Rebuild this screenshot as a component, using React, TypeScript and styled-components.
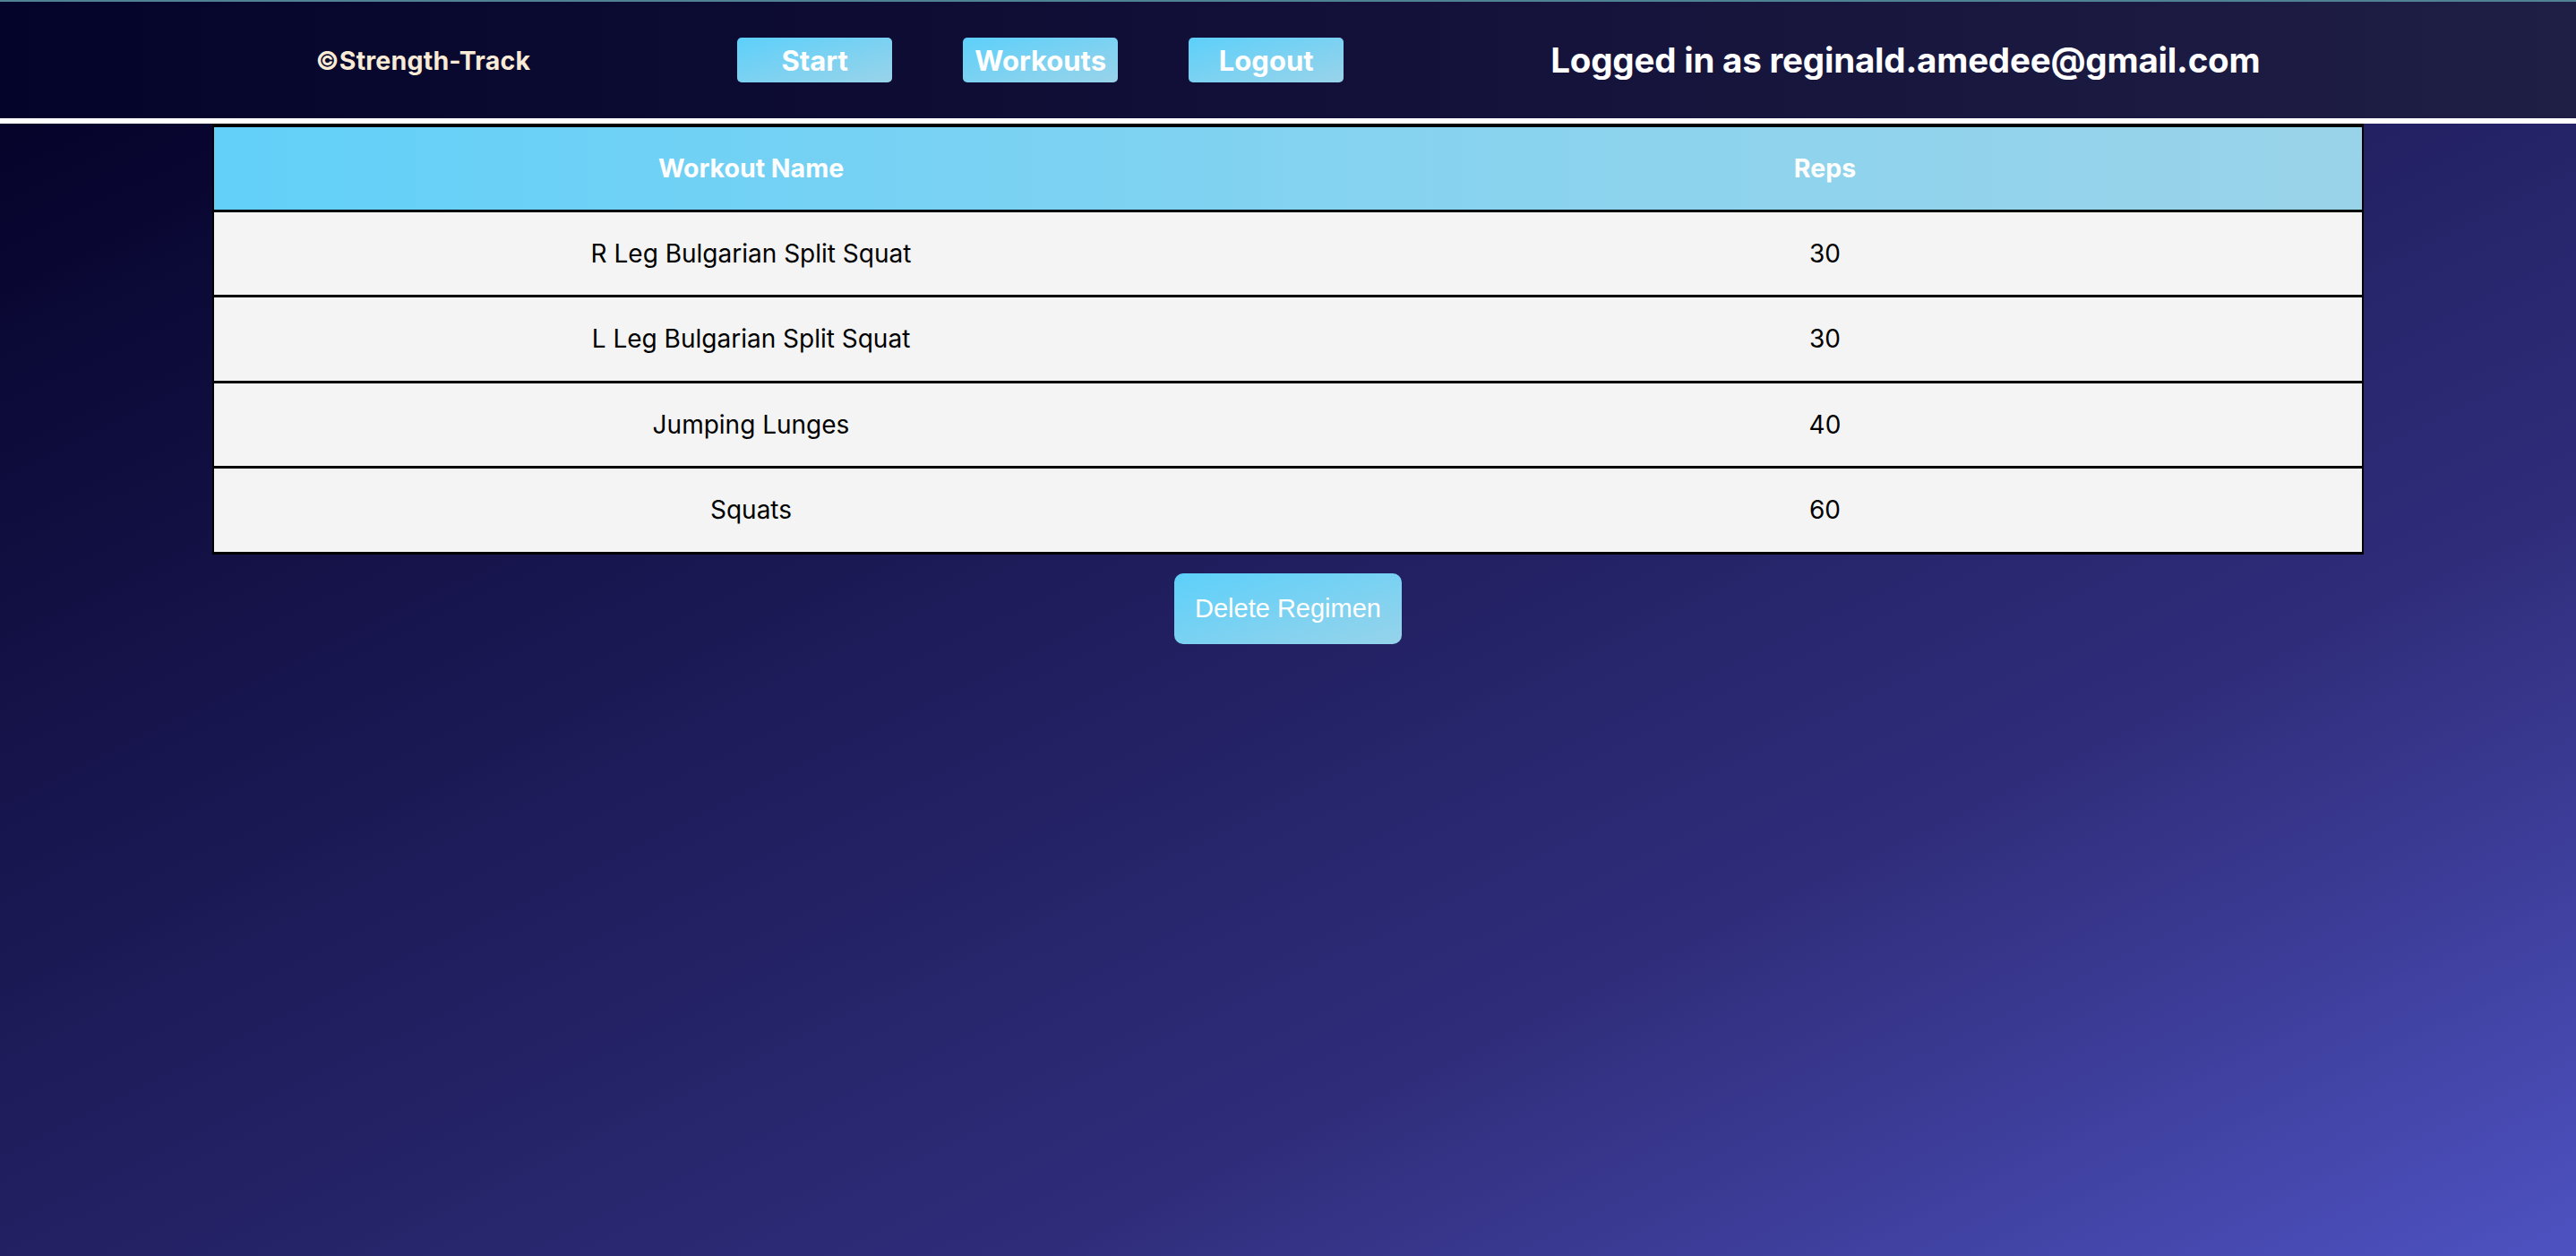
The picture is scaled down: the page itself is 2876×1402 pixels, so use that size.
import React from "react";
import styled, { createGlobalStyle } from "styled-components";

const GlobalStyle = createGlobalStyle`
  html, body {
    margin: 0;
    padding: 0;
  }
  body {
    font-family: Inter, "Noto Sans", "Liberation Sans", sans-serif;
  }
  * { box-sizing: border-box; }
`;

const Page = styled.div`
  min-height: 100vh;
  background: linear-gradient(
    to bottom right,
    #020024 0%,
    #1f1d5c 45%,
    #2f2d7a 70%,
    #4e52c1 100%
  );
  display: flex;
  flex-direction: column;
`;

const Header = styled.header`
  height: 138px;
  border-top: 2px solid #4f8393;
  border-bottom: 6px solid #ffffff;
  background: linear-gradient(to right, #04042a 0%, #121038 50%, #1f1e45 100%);
  display: flex;
  align-items: center;
  justify-content: space-around;
  padding: 0 237px;
`;

const Brand = styled.div`
  color: #faebd7;
  font-weight: 700;
  font-size: 28.5px;
  letter-spacing: 0.2px;
`;

const Nav = styled.nav`
  display: flex;
  gap: 79px;
`;

const NavButton = styled.button`
  width: 173px;
  height: 50px;
  border: none;
  border-radius: 5px;
  background: linear-gradient(to bottom right, #5dd0fa 0%, #99d3e9 100%);
  color: #ffffff;
  font-family: Inter, "Noto Sans", sans-serif;
  font-weight: 700;
  font-size: 31px;
  padding: 0;
  cursor: pointer;
`;

const UserText = styled.div`
  color: #ffffff;
  font-weight: 700;
  font-size: 38.5px;
  letter-spacing: -0.2px;
`;

const Main = styled.main`
  display: flex;
  flex-direction: column;
  align-items: center;
`;

const Table = styled.table`
  width: 2402px;
  border-collapse: collapse;
  border: 3px solid #000000;
  border-top-width: 4px;
  border-left-width: 2px;
  border-right-width: 2px;
`;

const HeadRow = styled.tr`
  background: linear-gradient(to right, #62d0f9 0%, #8cd3ee 65%, #99d3e9 100%);
`;

const HeadCell = styled.th`
  width: 50%;
  height: 95px;
  color: #ffffff;
  font-weight: 700;
  font-size: 28.5px;
  text-align: center;
  padding: 0;
`;

const BodyRow = styled.tr`
  background: #f4f4f4;
  border-top: 3px solid #000000;
`;

const BodyCell = styled.td`
  height: 95.5px;
  color: #000000;
  font-size: 28px;
  font-weight: 400;
  text-align: center;
  padding: 0;
`;

const DeleteButton = styled.button`
  margin-top: 21px;
  height: 79px;
  padding: 0 23px;
  border: none;
  border-radius: 10px;
  background: linear-gradient(to bottom right, #5dd0fa 0%, #96d3ea 100%);
  color: #ffffff;
  font-family: "Liberation Sans", Arial, sans-serif;
  font-size: 29px;
  cursor: pointer;
`;

const workouts = [
  { name: "R Leg Bulgarian Split Squat", reps: 30 },
  { name: "L Leg Bulgarian Split Squat", reps: 30 },
  { name: "Jumping Lunges", reps: 40 },
  { name: "Squats", reps: 60 },
];

export default function App() {
  return (
    <>
      <GlobalStyle />
      <Page>
        <Header>
          <Brand>©Strength-Track</Brand>
          <Nav>
            <NavButton>Start</NavButton>
            <NavButton>Workouts</NavButton>
            <NavButton>Logout</NavButton>
          </Nav>
          <UserText>Logged in as reginald.amedee@gmail.com</UserText>
        </Header>
        <Main>
          <Table>
            <thead>
              <HeadRow>
                <HeadCell>Workout Name</HeadCell>
                <HeadCell>Reps</HeadCell>
              </HeadRow>
            </thead>
            <tbody>
              {workouts.map((w) => (
                <BodyRow key={w.name}>
                  <BodyCell>{w.name}</BodyCell>
                  <BodyCell>{w.reps}</BodyCell>
                </BodyRow>
              ))}
            </tbody>
          </Table>
          <DeleteButton>Delete Regimen</DeleteButton>
        </Main>
      </Page>
    </>
  );
}
